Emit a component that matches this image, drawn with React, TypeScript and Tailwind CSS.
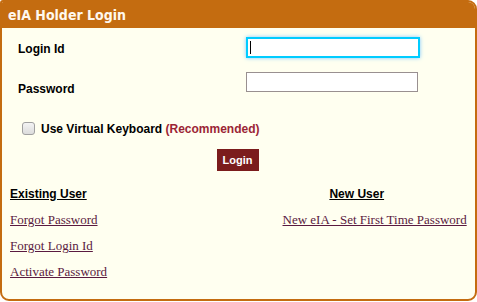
import React from "react";

export default function App() {
  const sans = { fontFamily: '"Liberation Sans", Arial, sans-serif' };
  const serif = { fontFamily: '"Liberation Serif", "Times New Roman", serif' };
  return (
    <div className="w-[477px] h-[302px] bg-white">
      <div className="w-[477px] h-[301px] border-2 border-[#c46c10] rounded-tl-[3px] rounded-tr-[9px] rounded-b-[9px] bg-[#fffff0] flex flex-col overflow-hidden">
        <div className="h-[26px] bg-[#c46c10] flex items-center pl-[6px] shrink-0">
          <span className="text-[#fff8ee] font-bold text-[14px]" style={{ fontFamily: '"DejaVu Sans Condensed", "DejaVu Sans", Tahoma, sans-serif' }}>
            eIA Holder Login
          </span>
        </div>
        <div className="flex flex-col" style={sans}>
          <div className="flex items-center h-[38px]">
            <span className="w-[244px] pl-[16px] text-[12px] font-bold text-black pt-[4px]">Login Id</span>
            <div className="w-[174px] h-[21px] border-2 border-[#00ccff] bg-white shadow-[0_0_4px_#7ec8ff] flex items-center pl-[2px]">
              <div className="w-px h-[13px] bg-black" />
            </div>
          </div>
          <div className="flex items-center h-[40px]">
            <span className="w-[244px] pl-[16px] text-[12px] font-bold text-black pt-[6px]">Password</span>
            <div className="w-[172px] h-[20px] border border-[#999090] bg-white -mt-[8px]" />
          </div>
          <div className="flex items-center h-[32px] pl-[20px] pt-[13px] gap-[6px]">
            <div className="w-[13px] h-[13px] rounded-[3px] border border-[#a0a0a0] bg-gradient-to-b from-[#f4f4f4] to-[#dcdcdc]" />
            <span className="text-[12px] font-bold text-black">
              Use Virtual Keyboard <span className="text-[#9b2535]">(Recommended)</span>
            </span>
          </div>
          <div className="flex justify-center pr-[2px] pt-[11px]">
            <div className="w-[42px] h-[22px] bg-[#7b1c1c] text-white text-[11px] font-bold flex items-center justify-center">
              Login
            </div>
          </div>
          <div className="grid grid-cols-2 pt-[15px]">
            <div className="pl-[8px] flex flex-col">
              <span className="text-[12px] font-bold underline text-black leading-[16px]">Existing User</span>
              <a className="mt-[10px] text-[13px] underline text-[#5a1a40] leading-[16px]" style={serif}>Forgot Password</a>
              <a className="mt-[10px] text-[13px] underline text-[#5a1a40] leading-[16px]" style={serif}>Forgot Login Id</a>
              <a className="mt-[10px] text-[13px] underline text-[#5a1a40] leading-[16px]" style={serif}>Activate Password</a>
            </div>
            <div className="flex flex-col">
              <span className="text-[12px] font-bold underline text-black leading-[16px] text-center">New User</span>
              <a className="mt-[10px] text-[13px] underline text-[#5a1a40] leading-[16px] pl-[44px]" style={serif}>New eIA - Set First Time Password</a>
            </div>
          </div>
        </div>
      </div>
    </div>
  );
}
